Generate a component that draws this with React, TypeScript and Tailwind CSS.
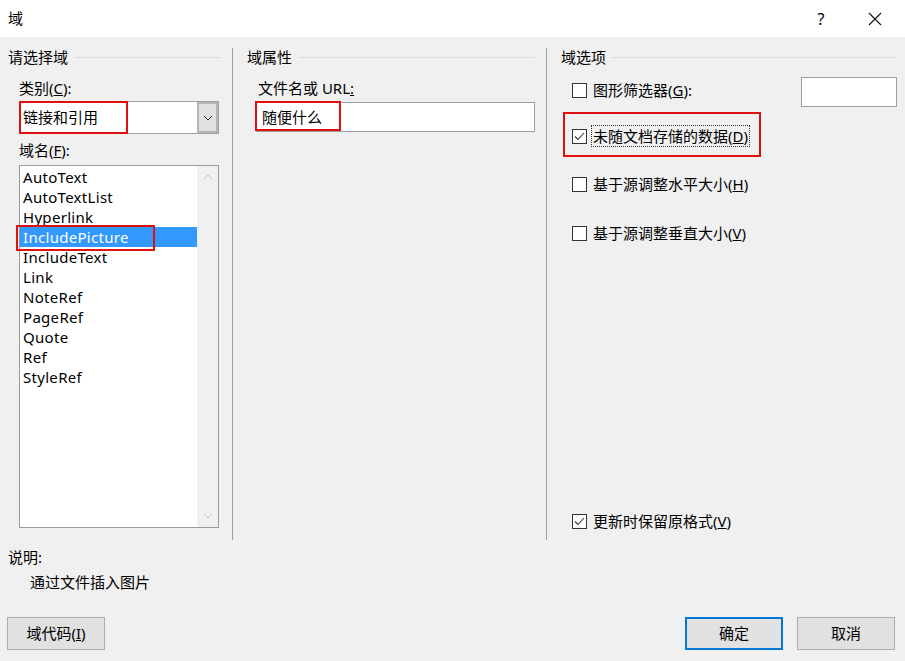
import React from 'react';

const font = { fontFamily: '"Noto Sans", "Noto Sans CJK SC", sans-serif' };

const fields = [
  'AutoText',
  'AutoTextList',
  'Hyperlink',
  'IncludePicture',
  'IncludeText',
  'Link',
  'NoteRef',
  'PageRef',
  'Quote',
  'Ref',
  'StyleRef',
];

const GroupHeader = ({ title }: { title: string }) => (
  <div className="flex items-center h-[18px] gap-[6px]">
    <span className="text-[15px] leading-[18px] whitespace-nowrap">{title}</span>
    <div className="flex-1 h-px bg-[#dcdcdc]" />
  </div>
);

const Chevron = ({ down, color }: { down?: boolean; color: string }) => (
  <svg width="10" height="6" viewBox="0 0 10 6">
    <path
      d={down ? 'M1 1 L5 5 L9 1' : 'M1 5 L5 1 L9 5'}
      fill="none"
      stroke={color}
      strokeWidth="1"
    />
  </svg>
);

const CheckBox = ({ checked }: { checked?: boolean }) => (
  <div className="w-[15px] h-[15px] border border-[#333] bg-white flex items-center justify-center shrink-0">
    {checked && (
      <svg width="11" height="9" viewBox="0 0 11 9">
        <path d="M1 4.5 L4 7.5 L10 1" fill="none" stroke="#333" strokeWidth="1.1" />
      </svg>
    )}
  </div>
);

const Option = ({ checked, children }: { checked?: boolean; children: React.ReactNode }) => (
  <div className="flex items-center gap-[6px] h-[20px]">
    <CheckBox checked={checked} />
    <span className="text-[15px] leading-[20px] whitespace-nowrap">{children}</span>
  </div>
);

const Button = ({ children, primary }: { children: React.ReactNode; primary?: boolean }) => (
  <div
    className={`w-[98px] h-[33px] flex items-center justify-center bg-[#e1e1e1] text-[15px] ${
      primary ? 'border-2 border-[#0078d7]' : 'border border-[#adadad]'
    }`}
  >
    {children}
  </div>
);

export default function App() {
  return (
    <div className="w-[905px] h-[661px] bg-[#f0f0f0] flex flex-col text-black" style={font}>
      {/* title bar */}
      <div className="h-[37px] bg-white flex items-center shrink-0">
        <span className="ml-2 text-[15px]">域</span>
        <div className="flex-1" />
        <span className="text-[16px] w-[20px] text-center mr-[37px]">?</span>
        <svg width="14" height="14" viewBox="0 0 14 14" className="mr-[23px]">
          <path d="M1 1 L13 13 M13 1 L1 13" stroke="#111" strokeWidth="1.1" />
        </svg>
      </div>

      {/* columns */}
      <div className="flex mt-[11px] h-[492px]">
        {/* left */}
        <div className="w-[232px] pl-2 pr-3 flex flex-col">
          <GroupHeader title="请选择域" />
          <div className="ml-[11px] mt-[13px] text-[15px] leading-[18px]">
            类别(<span className="underline">C</span>):
          </div>
          <div className="ml-[11px] mt-[4px] relative w-[200px] h-[33px] bg-white border border-[#a0a0a0] flex items-center">
            <span className="pl-[3px] text-[15px] flex-1">链接和引用</span>
            <div className="w-[21px] h-full bg-[#e1e1e1] border-2 border-[#b4b4b4] flex items-center justify-center">
              <Chevron down color="#333" />
            </div>
            <div className="absolute -left-px -top-px w-[109px] h-[33px] border-2 border-[#e01010]" />
          </div>
          <div className="ml-[11px] mt-[7px] text-[15px] leading-[18px]">
            域名(<span className="underline">F</span>):
          </div>
          <div className="ml-[11px] mt-[6px] relative w-[200px] h-[363px] bg-white border border-[#9a9a9a] flex">
            <div className="flex-1 pt-px">
              {fields.map((f, i) => (
                <div
                  key={f}
                  className={`h-[20px] leading-[20px] pl-[3px] text-[15px] tracking-[0.3px] ${
                    i === 3 ? 'bg-[#3399ff] text-white' : ''
                  }`}
                >
                  {f}
                </div>
              ))}
            </div>
            <div className="w-[21px] bg-[#f0f0f0] flex flex-col items-center justify-between py-[8px]">
              <Chevron color="#c0c0c0" />
              <Chevron down color="#c0c0c0" />
            </div>
            <div className="absolute left-[-4px] top-[59px] w-[139px] h-[26px] border-2 border-[#e01010]" />
          </div>
        </div>
        <div className="w-px bg-[#a0a0a0]" />

        {/* middle */}
        <div className="w-[313px] pl-[14px] pr-[11px] flex flex-col">
          <GroupHeader title="域属性" />
          <div className="ml-[11px] mt-[13px] text-[15px] leading-[18px]">
            文件名或 URL<span className="underline">:</span>
          </div>
          <div className="ml-[9px] mt-[5px] relative w-[279px] h-[30px] bg-white border border-[#a0a0a0] flex items-center">
            <span className="pl-[5px] text-[15px]">随便什么</span>
            <div className="absolute -left-[2px] -top-[2px] w-[86px] h-[30px] border-2 border-[#e01010]" />
          </div>
        </div>
        <div className="w-px bg-[#a0a0a0]" />

        {/* right */}
        <div className="flex-1 pl-[14px] pr-2 flex flex-col relative">
          <GroupHeader title="域选项" />
          <div className="ml-[11px] mt-[14px] flex items-start justify-between h-[20px]">
            <Option>
              图形筛选器(<span className="underline">G</span>):
            </Option>
            <div className="w-[96px] h-[30px] bg-white border border-[#a0a0a0] -mt-[3px]" />
          </div>
          <div className="ml-[11px] mt-[25px] relative">
            <div className="flex items-center gap-[4px] h-[22px]">
              <CheckBox checked />
              <span className="text-[15px] leading-[20px] whitespace-nowrap border border-dotted border-[#333] px-px">
                未随文档存储的数据(<span className="underline">D</span>)
              </span>
            </div>
            <div className="absolute left-[-9px] top-[-13px] w-[198px] h-[45px] border-2 border-[#e01010]" />
          </div>
          <div className="ml-[11px] mt-[27px]">
            <Option>
              基于源调整水平大小(<span className="underline">H</span>)
            </Option>
          </div>
          <div className="ml-[11px] mt-[29px]">
            <Option>
              基于源调整垂直大小(<span className="underline">V</span>)
            </Option>
          </div>
          <div className="flex-1" />
          <div className="ml-[11px] mb-[9px]">
            <Option checked>
              更新时保留原格式(<span className="underline">V</span>)
            </Option>
          </div>
        </div>
      </div>

      {/* description */}
      <div className="pl-2 mt-[8px] text-[15px] leading-[18px]">说明:</div>
      <div className="pl-[30px] mt-[7px] text-[15px] leading-[18px]">通过文件插入图片</div>

      {/* buttons */}
      <div className="flex items-center pl-[7px] pr-[10px] mt-[26px]">
        <Button>
          域代码(<span className="underline">I</span>)
        </Button>
        <div className="flex-1" />
        <div className="flex gap-[14px]">
          <Button primary>确定</Button>
          <Button>取消</Button>
        </div>
      </div>
    </div>
  );
}
